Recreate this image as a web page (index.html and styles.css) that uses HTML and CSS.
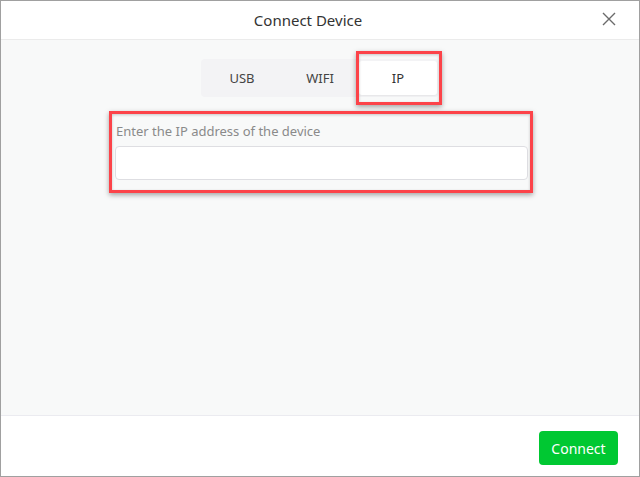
FILE: index.html
```html
<!DOCTYPE html>
<html lang="en">
  <head>
    <meta charset="UTF-8" />
    <meta name="viewport" content="width=device-width, initial-scale=1.0" />
    <title>Connect Device</title>
    <link rel="stylesheet" href="styles.css">
  </head>
  <body>
    <div class="dialog">
      <!-- Header -->
      <div class="dialog-header">
        <span class="dialog-title">Connect Device</span>
        <button type="button" class="close-btn" aria-label="Close">
          <svg width="14" height="14" viewBox="0 0 14 14">
            <path d="M1 1 L13 13 M13 1 L1 13" stroke="#6b6b6b" stroke-width="1.4" fill="none" />
          </svg>
        </button>
      </div>

      <!-- Body -->
      <div class="dialog-body">
        <div class="tabs">
          <div class="tab">USB</div>
          <div class="tab">WIFI</div>
          <div class="tab active marked">IP</div>
        </div>

        <div class="field marked">
          <label for="ip" class="field-label">Enter the IP address of the device</label>
          <input type="text" id="ip" class="field-input" />
        </div>
      </div>

      <!-- Footer -->
      <div class="dialog-footer">
        <button type="button" class="connect-btn">Connect</button>
      </div>
    </div>
  </body>
</html>
```

FILE: styles.css
```css
/* Reset & Base Styles */
* {
  margin: 0;
  padding: 0;
  box-sizing: border-box;
}

body {
  font-family: "Noto Sans", "Open Sans", sans-serif;
  color: #333;
  background-color: #fff;
}

.dialog {
  width: 640px;
  height: 477px;
  border: 1px solid #a0a0a0;
  display: flex;
  flex-direction: column;
  background-color: #fff;
}

/* Header */
.dialog-header {
  height: 39px;
  border-bottom: 1px solid #ebebeb;
  display: flex;
  align-items: center;
  justify-content: center;
  padding-right: 24px;
  position: relative;
}

.dialog-title {
  font-size: 15px;
  color: #333;
}

.close-btn {
  position: absolute;
  right: 23px;
  top: 11px;
  width: 14px;
  height: 14px;
  border: none;
  background: none;
  cursor: pointer;
  display: flex;
}

/* Body */
.dialog-body {
  flex: 1;
  background-color: #f8f9f9;
  padding-top: 19px;
}

.tabs {
  width: 238px;
  height: 38px;
  margin: 0 auto;
  padding: 2px;
  display: flex;
  background-color: #f3f3f5;
  border-radius: 4px;
}

.tab {
  width: 78px;
  display: flex;
  align-items: center;
  justify-content: center;
  font-size: 13px;
  color: #444;
  border-radius: 3px;
  cursor: pointer;
}

.tab.active {
  background-color: #fff;
  color: #333;
  box-shadow: 0 1px 2px rgba(0, 0, 0, 0.06);
}

.field {
  width: 413px;
  margin: 25px 0 0 114px;
  display: flex;
  flex-direction: column;
}

.field-label {
  font-size: 13px;
  line-height: 18px;
  color: #8a8a8a;
  margin-bottom: 6px;
  padding-left: 1px;
}

.field-input {
  height: 34px;
  border: 1px solid #dedee2;
  border-radius: 4px;
  background-color: #fff;
  font-size: 13px;
  padding: 0 8px;
}

/* Red highlight marks drawn over the screenshot */
.marked {
  position: relative;
}

.marked::after {
  content: "";
  position: absolute;
  border: 3px solid #fc4349;
  box-shadow: 0 2px 5px rgba(0, 0, 0, 0.35), inset 0 1px 3px rgba(0, 0, 0, 0.2);
  pointer-events: none;
}

.tab.marked::after {
  top: -10px;
  bottom: -10px;
  left: -3px;
  right: -5px;
}

.field.marked::after {
  top: -11px;
  bottom: -13px;
  left: -6px;
  right: -5px;
}

/* Footer */
.dialog-footer {
  height: 61px;
  border-top: 1px solid #ebebf0;
  display: flex;
  justify-content: flex-end;
  align-items: flex-start;
  padding: 15px 21px 0 0;
}

.connect-btn {
  width: 79px;
  height: 34px;
  border: none;
  border-radius: 4px;
  background-color: #00c832;
  color: #fff;
  font-family: inherit;
  font-size: 14px;
  cursor: pointer;
}
```
